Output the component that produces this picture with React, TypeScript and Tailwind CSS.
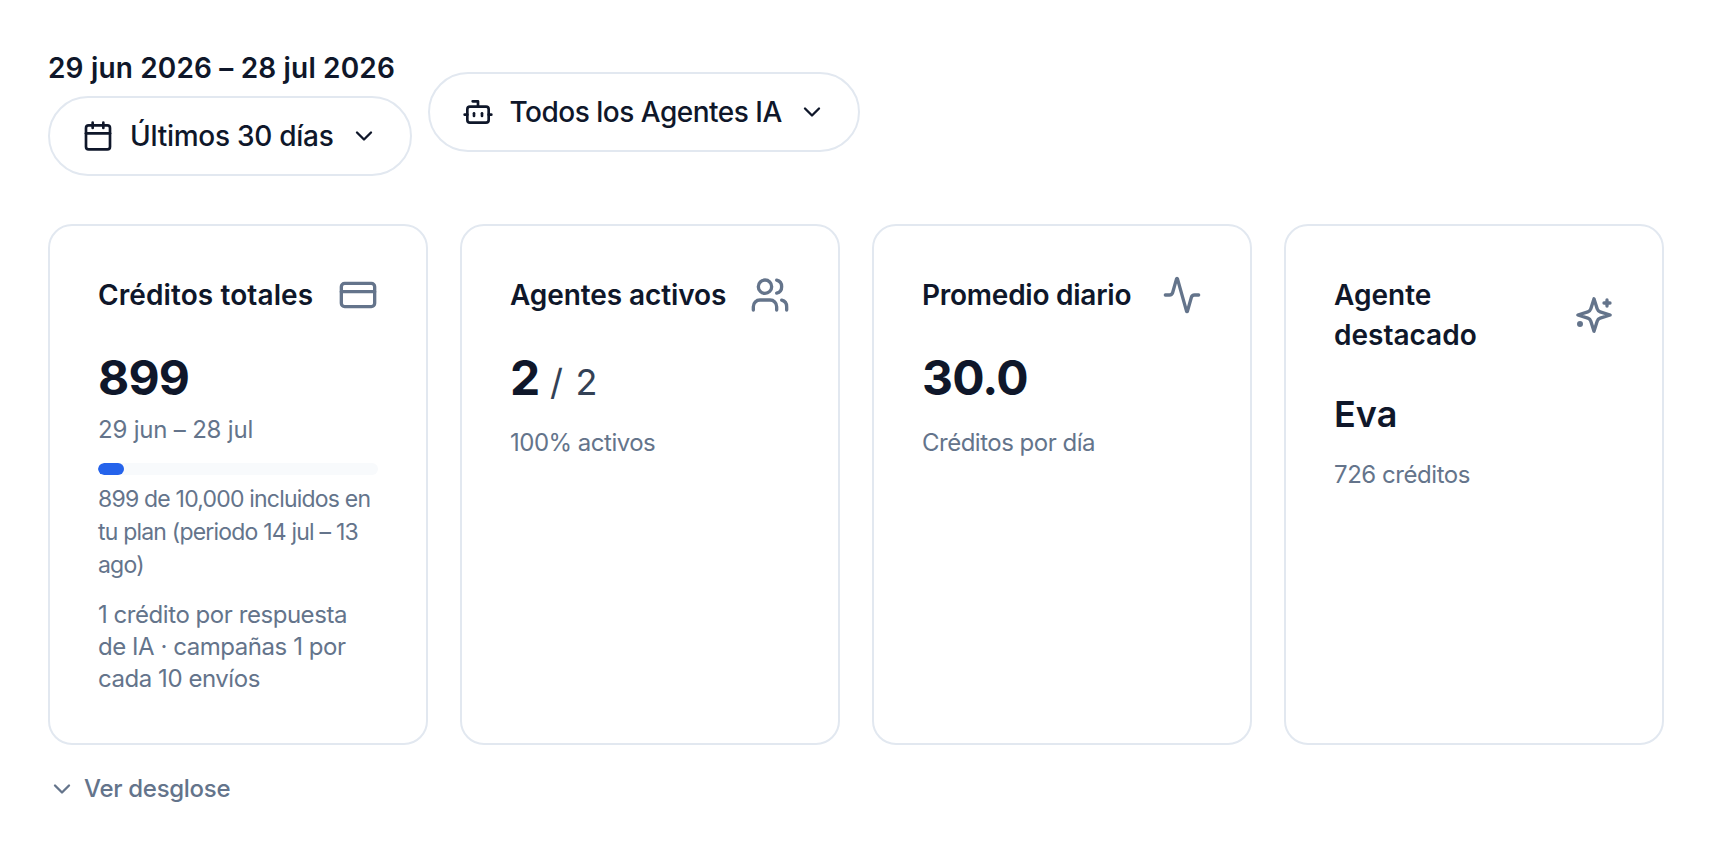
import { Activity, Bot, Calendar, ChevronDown, CreditCard, Users } from 'lucide-react';
import type { ReactNode } from 'react';

function SparkleIcon() {
  return (
    <svg width="40" height="40" viewBox="0 0 24 24" fill="none" stroke="currentColor" strokeWidth="2" strokeLinecap="round" strokeLinejoin="round">
      <path d="M12 2.300 13.900 8.300a2.800 2.800 0 0 0 1.800 1.800L21.700 12l-6 1.900a2.800 2.800 0 0 0-1.800 1.800L12 21.700l-1.900-6a2.800 2.800 0 0 0-1.800-1.800L2.300 12l6-1.900a2.800 2.800 0 0 0 1.800-1.800Z" />
      <path d="M19.800 3v3.600" />
      <path d="M21.600 4.800H18" />
      <circle cx="3.600" cy="17.400" r="0.8" fill="currentColor" />
    </svg>
  );
}

function FilterButton({ icon, children }: { icon: ReactNode; children: ReactNode }) {
  return (
    <button className="flex h-20 items-center gap-4 rounded-full border-2 border-[#e2e8f0] bg-white px-8 text-[28px] font-medium text-[#0f172a]">
      {icon}
      {children}
      <ChevronDown size={28} strokeWidth={2} />
    </button>
  );
}

function Card({ title, icon, children }: { title: ReactNode; icon: ReactNode; children: ReactNode }) {
  return (
    <div className="rounded-3xl border-2 border-[#e2e8f0] bg-white px-12 pt-[49px] pb-12">
      <div className="mb-[31px] flex items-center justify-between gap-4">
        <h3 className="text-[28px] leading-10 font-semibold text-[#0f172a]">{title}</h3>
        <span className="shrink-0 text-[#64748b]">{icon}</span>
      </div>
      {children}
    </div>
  );
}

export default function App() {
  return (
    <div className="min-h-screen bg-white p-12 font-['Inter',sans-serif]">
      <div className="mb-12 flex items-center gap-4">
        <div className="flex flex-col items-start gap-2">
          <p className="text-[28px] leading-10 font-semibold tracking-[0.16px] text-[#0f172a]">29 jun 2026 – 28 jul 2026</p>
          <FilterButton icon={<Calendar size={32} strokeWidth={2} />}>
            <span className="tracking-[-0.27px]">Últimos 30 días</span>
          </FilterButton>
        </div>
        <FilterButton icon={<Bot size={32} strokeWidth={2} />}>
          <span className="tracking-[-0.5px]">Todos los Agentes IA</span>
        </FilterButton>
      </div>

      <div className="grid grid-cols-4 gap-8">
        <Card title={<span className="tracking-[0.1px]">Créditos totales</span>} icon={<CreditCard size={40} strokeWidth={2} />}>
          <div className="text-5xl leading-16 font-bold tracking-[-0.8px] text-[#0f172a]">899</div>
          <p className="mt-1 text-2xl leading-8 tracking-[-0.2px] text-[#64748b]">29 jun – 28 jul</p>
          <div className="mt-[17px] h-3 w-full overflow-hidden rounded-full bg-[#f8fafc]">
            <div className="h-full w-[26px] rounded-full bg-[#2563eb]" />
          </div>
          <p className="mt-2 text-[23px] leading-[33px] tracking-[-0.8px] whitespace-nowrap text-[#64748b]">
            899 de 10,000 incluidos en
            <br />
            tu plan (periodo 14 jul – 13
            <br />
            ago)
          </p>
          <p className="mt-[17px] text-2xl leading-8 tracking-[-0.45px] text-[#64748b]">1 crédito por respuesta de IA · campañas 1 por cada 10 envíos</p>
        </Card>

        <Card title={<span className="tracking-[-0.1px]">Agentes activos</span>} icon={<Users size={40} strokeWidth={2} />}>
          <div className="text-5xl leading-16 font-bold tracking-[-0.8px] text-[#0f172a]">
            2 <span className="text-4xl font-normal tracking-[1.2px] text-[#334155]">/ 2</span>
          </div>
          <p className="mt-[17px] text-2xl leading-8 tracking-[-0.5px] text-[#64748b]">100% activos</p>
        </Card>

        <Card title={<span className="tracking-[-0.25px]">Promedio diario</span>} icon={<Activity size={40} strokeWidth={2} />}>
          <div className="text-5xl leading-16 font-bold tracking-[-0.8px] text-[#0f172a]">30.0</div>
          <p className="mt-[17px] text-2xl leading-8 tracking-[-0.5px] text-[#64748b]">Créditos por día</p>
        </Card>

        <Card title="Agente destacado" icon={<SparkleIcon />}>
          <div className="text-4xl leading-14 font-semibold text-[#0f172a]">Eva</div>
          <p className="mt-[17px] text-2xl leading-8 tracking-[-0.45px] text-[#64748b]">726 créditos</p>
        </Card>
      </div>

      <button className="mt-6 flex h-10 items-center gap-2 text-2xl font-medium tracking-[-0.3px] text-[#64748b]">
        <ChevronDown size={28} strokeWidth={2} />
        Ver desglose
      </button>
    </div>
  );
}
